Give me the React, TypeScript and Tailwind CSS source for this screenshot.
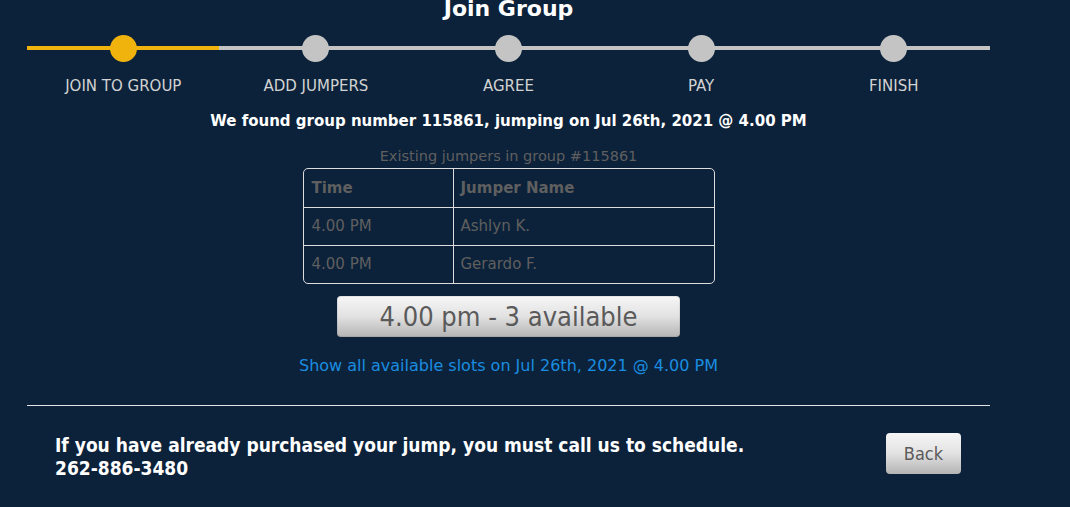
import React from "react"

const steps = ["JOIN TO GROUP", "ADD JUMPERS", "AGREE", "PAY", "FINISH"]

const jumpers = [
  { time: "4.00 PM", name: "Ashlyn K." },
  { time: "4.00 PM", name: "Gerardo F." },
]

const font = { fontFamily: '"DejaVu Sans", sans-serif' }
const narrow = { fontFamily: '"DejaVu Sans Condensed", "DejaVu Sans", sans-serif' }

export default function App() {
  return (
    <div className="w-[1070px] h-[507px] overflow-hidden bg-[#0c223a]" style={font}>
      <div className="w-[963px] ml-[27px] -mt-[6px]">
        {/* Title */}
        <h1 className="text-center text-[22px] leading-[30px] font-bold text-white">Join Group</h1>

        {/* Stepper */}
        <div className="relative mt-[11px] h-[27px]">
          <div className="absolute left-0 right-0 top-[11px] h-[4px] bg-[#c4c4c4]" />
          <div className="absolute left-0 w-[192px] top-[11px] h-[4px] bg-[#f0b30d]" />
          <div className="relative grid grid-cols-5 h-full">
            {steps.map((s, i) => (
              <div key={s} className="flex justify-center">
                <div className={`w-[27px] h-[27px] rounded-full ${i === 0 ? "bg-[#f0b30d]" : "bg-[#c4c4c4]"}`} />
              </div>
            ))}
          </div>
        </div>
        <div className="grid grid-cols-5 mt-[14px]">
          {steps.map((s) => (
            <div key={s} className="text-center text-[15px] leading-[20px] text-[#d2d2d2]">
              {s}
            </div>
          ))}
        </div>

        {/* Found message */}
        <p className="mt-[15px] text-center text-[15px] leading-[20px] font-bold text-white">
          We found group number 115861, jumping on Jul 26th, 2021 @ 4.00 PM
        </p>

        <p className="mt-[15px] text-center text-[14.5px] leading-[20px] text-[#5f5f5f]">
          Existing jumpers in group #115861
        </p>

        {/* Table */}
        <div className="mx-auto mt-[2px] w-[412px] border border-[#dcdcdc] rounded-[5px] overflow-hidden">
          <div className="flex h-[38px] items-center">
            <div className="w-[150px] h-full flex items-center pl-[8px] border-r border-[#dcdcdc] text-[15px] font-bold text-[#5f5f5f]">
              Time
            </div>
            <div className="flex-1 h-full flex items-center pl-[7px] text-[15px] font-bold text-[#5f5f5f]">
              Jumper Name
            </div>
          </div>
          {jumpers.map((j) => (
            <div key={j.name} className="flex h-[38px] items-center border-t border-[#dcdcdc]">
              <div className="w-[150px] h-full flex items-center pl-[8px] border-r border-[#dcdcdc] text-[15px] text-[#5f5f5f]">
                {j.time}
              </div>
              <div className="flex-1 h-full flex items-center pl-[7px] text-[15px] text-[#5f5f5f]">
                {j.name}
              </div>
            </div>
          ))}
        </div>

        {/* Slot button */}
        <div className="flex justify-center mt-[12px]">
          <button
            className="w-[343px] h-[41px] rounded-[4px] bg-gradient-to-b from-[#f6f6f6] via-[#e2e2e2] to-[#b4b4b4] text-[27px] leading-[40px] text-[#5a5a5a] shadow-[inset_0_0_0_1px_rgba(0,0,0,0.08)]"
            style={narrow}
          >
            4.00 pm - 3 available
          </button>
        </div>

        <p className="mt-[18px] text-center text-[16px] leading-[22px] text-[#1a8de0]">
          Show all available slots on Jul 26th, 2021 @ 4.00 PM
        </p>

        <hr className="mt-[28px] border-0 border-t border-[#e4e4e4]" />

        {/* Footer */}
        <div className="flex items-start justify-between mt-[27px] pl-[28px] pr-[29px]">
          <div className="text-[19px] leading-[23px] font-bold text-white pt-[1px]" style={narrow}>
            <p>If you have already purchased your jump, you must call us to schedule.</p>
            <p>262-886-3480</p>
          </div>
          <button
            className="w-[75px] h-[41px] rounded-[4px] bg-gradient-to-b from-[#f6f6f6] via-[#e2e2e2] to-[#b4b4b4] text-[18px] text-[#5a5a5a]"
            style={narrow}
          >
            Back
          </button>
        </div>
      </div>
    </div>
  )
}
